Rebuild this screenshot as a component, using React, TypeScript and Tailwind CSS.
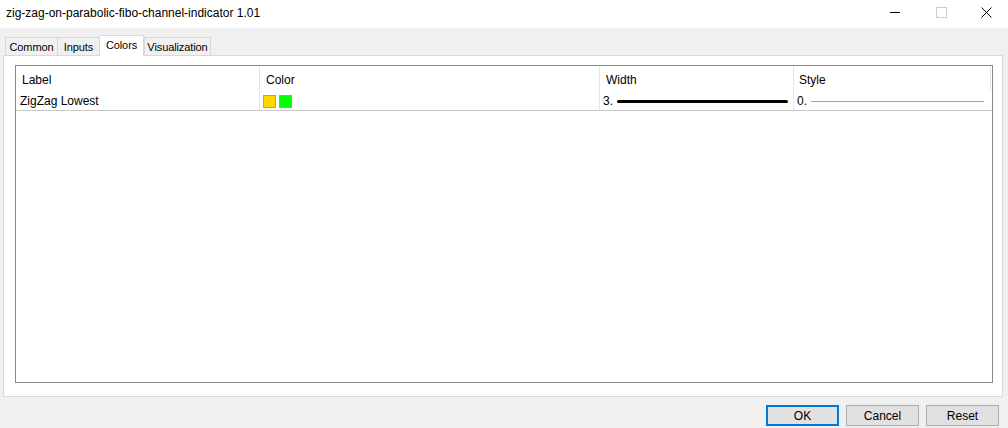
import React from "react";

const font = { fontFamily: '"Segoe UI", "Liberation Sans", Arial, sans-serif' };

function Tab({ label, w, selected, last }: { label: string; w: string; selected?: boolean; last?: boolean }) {
  if (selected) {
    return (
      <div
        className={`${w} h-[21px] -mb-px relative z-10 bg-white border-l border-t border-r border-[#d9d9d9] flex items-center justify-center text-[11px] tracking-[-0.1px] text-black pb-[1px]`}
      >
        {label}
      </div>
    );
  }
  return (
    <div
      className={`${w} h-[18px] bg-[#f0f0f0] border-l border-t ${last ? "border-r" : ""} border-[#d9d9d9] flex items-center justify-center text-[11px] tracking-[-0.1px] text-black pt-[1px]`}
    >
      {label}
    </div>
  );
}

function Btn({ label, primary }: { label: string; primary?: boolean }) {
  return (
    <div
      className={`w-[73px] h-[21px] flex items-center justify-center text-[12px] text-black bg-[#e1e1e1] ${
        primary ? "border-2 border-[#0078d7]" : "border border-[#adadad]"
      }`}
    >
      {label}
    </div>
  );
}

export default function App() {
  return (
    <div className="w-[1008px] h-[428px] bg-[#f0f0f0] flex flex-col overflow-hidden" style={font}>
      {/* Title bar */}
      <div className="h-[28px] bg-white flex items-center shrink-0">
        <div className="pl-[6px] text-[12px] text-black pb-[2px]">zig-zag-on-parabolic-fibo-channel-indicator 1.01</div>
        <div className="ml-auto flex h-full">
          <div className="w-[46px] h-full flex items-start justify-center pt-[12px]">
            <div className="w-[10px] h-px bg-black" />
          </div>
          <div className="w-[46px] h-full flex items-start justify-center pt-[7px]">
            <div className="w-[11px] h-[11px] border border-[#cccccc]" />
          </div>
          <div className="w-[44px] h-full flex items-start justify-center pt-[7px]">
            <svg width="11" height="11" viewBox="0 0 11 11">
              <path d="M0.5 0.5 L10.5 10.5 M10.5 0.5 L0.5 10.5" stroke="#000" strokeWidth="1" />
            </svg>
          </div>
        </div>
      </div>

      {/* Tabs */}
      <div className="pt-[7px] pl-[5px] flex items-end h-[27px] shrink-0">
        <Tab label="Common" w="w-[52px]" />
        <Tab label="Inputs" w="w-[42px]" />
        <Tab label="Colors" w="w-[45px]" selected />
        <Tab label="Visualization" w="w-[67px]" last />
      </div>

      {/* Panel */}
      <div className="ml-[3px] w-[1000px] h-[342px] bg-white border border-[#d9d9d9] pl-[11px] pt-[9px] shrink-0">
        <div className="w-[978px] h-[318px] border border-[#828790] bg-white flex flex-col">
          {/* header */}
          <div className="flex h-[24px] text-[12px] text-black">
            <div className="w-[244px] border-r border-[#e5e5e5] pl-[6px] pt-[3px] flex items-center">Label</div>
            <div className="w-[340px] border-r border-[#e5e5e5] pl-[6px] pt-[3px] flex items-center">Color</div>
            <div className="w-[194px] border-r border-[#e5e5e5] pl-[6px] pt-[3px] flex items-center">Width</div>
            <div className="w-[197px] border-r border-[#e5e5e5] pl-[5px] pt-[3px] flex items-center">Style</div>
          </div>
          {/* row */}
          <div className="flex h-[21px] border-b border-[#c8c8c8] text-[12px] text-black">
            <div className="w-[244px] border-r border-[#e5e5e5] pl-[4px] pt-[2px] flex items-center">ZigZag Lowest</div>
            <div className="w-[340px] border-r border-[#e5e5e5] pl-[3px] pt-[2px] flex items-center gap-[3px]">
              <div className="w-[13px] h-[13px] bg-[#ffd700] border border-[#a0a0a0]" />
              <div className="w-[13px] h-[13px] bg-[#00ff00] border border-[#a0a0a0]" />
            </div>
            <div className="w-[194px] border-r border-[#e5e5e5] pl-[3px] pr-[5px] pt-[2px] flex items-center">
              <span>3.</span>
              <div className="flex-1 ml-[4px] h-[3px] bg-black rounded-full" />
            </div>
            <div className="flex-1 pl-[3px] pr-[8px] pt-[2px] flex items-center">
              <span>0.</span>
              <div className="flex-1 ml-[4px] h-px bg-[#a0a0a0]" />
            </div>
          </div>
        </div>
      </div>

      {/* Buttons */}
      <div className="mt-[8px] flex justify-end gap-[7px] pr-[9px]">
        <Btn label="OK" primary />
        <Btn label="Cancel" />
        <Btn label="Reset" />
      </div>
    </div>
  );
}
